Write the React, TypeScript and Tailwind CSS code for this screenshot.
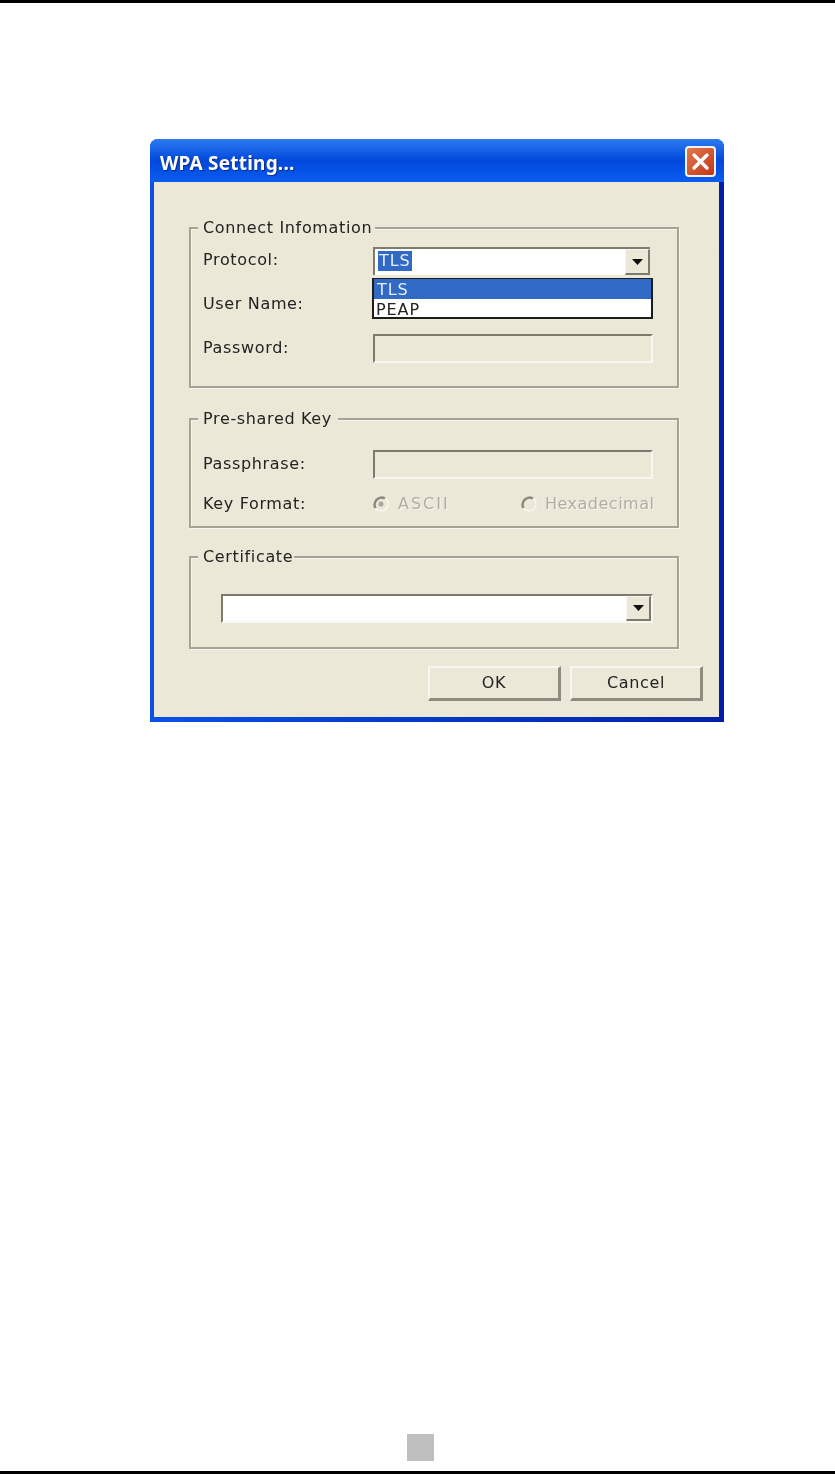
import React from "react";

const font = { fontFamily: '"DejaVu Sans", sans-serif' };

function Sunken({ white, className = "", children }: { white?: boolean; className?: string; children?: React.ReactNode }) {
  return (
    <div
      className={
        "relative h-[29px] border-2 border-t-[#7d7a6e] border-l-[#7d7a6e] border-r-[#f8f7f2] border-b-[#f8f7f2] " +
        (white ? "bg-white " : "bg-[#ebe8d8] ") +
        className
      }
    >
      {children}
    </div>
  );
}

function DropButton() {
  return (
    <div className="absolute right-0 top-0 bottom-0 w-[25px] bg-[#ebe8d8] border-r-2 border-b-2 border-r-[#7d7a6e] border-b-[#7d7a6e] border-l border-t border-l-[#f7f6f0] border-t-[#f7f6f0] flex items-center justify-center">
      <svg width="11" height="6" viewBox="0 0 11 6"><path d="M0 0H11L5.5 6Z" fill="#111" /></svg>
    </div>
  );
}

function Group({ title, width, className = "", children }: { title: string; width: number; className?: string; children: React.ReactNode }) {
  return (
    <div className={"relative border-2 border-[#a6a394] shadow-[inset_1px_1px_0_#f6f5ef,1px_1px_0_#f6f5ef] " + className}>
      <div className="absolute left-[7px] -top-[11px] h-[20px] pl-[5px] bg-[#ebe8d8] text-[16px] leading-[20px] tracking-[0.65px] text-[#222] whitespace-nowrap" style={{ width }}>
        {title}
      </div>
      {children}
    </div>
  );
}

function Label({ children }: { children: React.ReactNode }) {
  return <div className="w-[170px] shrink-0 -mt-[2px] text-[16px] tracking-[0.65px] text-[#222] whitespace-nowrap">{children}</div>;
}

function Radio({ checked }: { checked?: boolean }) {
  return (
    <svg width="18" height="18" viewBox="0 0 18 18" className="shrink-0">
      <circle cx="9" cy="9" r="7" fill="#ebe8d8" stroke="#f8f7f1" strokeWidth="1.5" />
      <path d="M3.5 13A7 7 0 0 1 13 3.5" fill="none" stroke="#8c8a7e" strokeWidth="2.5" />
      {checked && <circle cx="9" cy="9" r="2.5" fill="#a9a79b" />}
    </svg>
  );
}

function Button({ children }: { children: React.ReactNode }) {
  return (
    <div className="w-[133px] h-[35px] flex items-center justify-center bg-[#ebe8d8] border-t-2 border-l-2 border-t-[#f8f7f1] border-l-[#f8f7f1] border-r-[3px] border-b-[3px] border-r-[#8f8c7f] border-b-[#8f8c7f] text-[16px] tracking-[0.65px] text-[#222]">
      {children}
    </div>
  );
}

export default function App() {
  return (
    <div className="w-[835px] h-[1474px] bg-white flex flex-col overflow-hidden" style={font}>
      <div className="h-[3px] bg-black shrink-0" />
      <div className="ml-[150px] mt-[136px] w-[574px] h-[583px] flex flex-col rounded-t-[8px] overflow-hidden bg-[#0a3ad8] blur-[0.4px]">
        <div className="h-[43px] shrink-0 flex items-center justify-between pl-[10px] pr-[8px] bg-gradient-to-b from-[#2c7af0] via-[#0348dc] to-[#0a5cf0]">
          <div className="mt-[5px] text-[19px] font-bold tracking-[0.2px] text-white [text-shadow:1px_1px_1px_#0a2a8a]" style={{ fontFamily: '"Noto Sans", sans-serif' }}>
            WPA Setting...
          </div>
          <div className="w-[31px] h-[31px] mt-[2px] rounded-[4px] border-2 border-[#f2f2f2] bg-gradient-to-br from-[#e4784f] to-[#bf3412] flex items-center justify-center">
            <svg width="19" height="19" viewBox="0 0 19 19"><path d="M3 3L16 16M16 3L3 16" stroke="#fff" strokeWidth="3.4" strokeLinecap="round" /></svg>
          </div>
        </div>
        <div className="flex-1 flex bg-gradient-to-r from-[#0a50e8] to-[#001fa8] pl-[4px] pr-[5px] pb-[5px]">
          <div className="flex-1 bg-[#ebe8d8] pl-[35px] pr-[40px] pt-[45px] flex flex-col">
            <Group title="Connect Infomation" width={177} className="h-[161px] pl-[12px] pt-[18px]">
              <div className="flex flex-col gap-[15px]">
                <div className="flex items-center">
                  <Label>Protocol:</Label>
                  <div className="relative w-[280px]">
                    <div className="relative h-[28px] w-[277px] bg-white border-t-2 border-l-2 border-t-[#7d7a6e] border-l-[#7d7a6e]">
                      <span className="absolute left-[3px] top-[2px] h-[20px] pl-[1px] pr-[1px] bg-[#316ac5] text-[#e8eefb] text-[16px] leading-[20px] tracking-[0.9px]">TLS</span>
                      <DropButton />
                    </div>
                    <div className="absolute -left-[1px] top-[31px] w-[281px] h-[41px] z-10 border-2 border-[#1d1d1d] bg-white text-[16px] leading-[20px] tracking-[0.9px]">
                      <div className="h-[19px] -mt-[1px] pt-[1px] bg-[#316ac5] text-[#e8eefb] pl-[3px] box-content">TLS</div>
                      <div className="pl-[2px] pt-[1px] text-[#222]">PEAP</div>
                    </div>
                  </div>
                </div>
                <div className="flex items-center">
                  <Label>User Name:</Label>
                  <Sunken className="w-[280px]" />
                </div>
                <div className="flex items-center">
                  <Label>Password:</Label>
                  <Sunken className="w-[280px]" />
                </div>
              </div>
            </Group>
            <Group title="Pre-shared Key" width={140} className="mt-[30px] h-[110px] pl-[12px] pt-[30px]">
              <div className="flex items-center">
                <Label>Passphrase:</Label>
                <Sunken className="w-[280px]" />
              </div>
              <div className="flex items-center mt-[11px] h-[28px]">
                <div className="mt-[2px]"><Label>Key Format:</Label></div>
                <div className="flex items-center gap-[8px] -ml-[1px] w-[148px] shrink-0 text-[16px] tracking-[2px] text-[#b0aea2] [text-shadow:1px_1px_0_#f8f7f1]">
                  <Radio checked />
                  <span>ASCII</span>
                </div>
                <div className="flex items-center gap-[7px] text-[16px] tracking-[0.5px] text-[#b0aea2] [text-shadow:1px_1px_0_#f8f7f1]">
                  <Radio />
                  <span>Hexadecimal</span>
                </div>
              </div>
            </Group>
            <Group title="Certificate" width={96} className="mt-[28px] h-[93px] pl-[30px] pt-[36px]">
              <Sunken white className="w-[432px]">
                <DropButton />
              </Sunken>
            </Group>
            <div className="mt-[17px] -mr-[24px] flex justify-end gap-[9px]">
              <Button>OK</Button>
              <Button>Cancel</Button>
            </div>
          </div>
        </div>
      </div>
      <div className="mt-auto flex flex-col">
        <div className="ml-[407px] w-[27px] h-[27px] bg-[#bfbfbf]" />
        <div className="mt-[10px] h-[3px] bg-black" />
      </div>
    </div>
  );
}
